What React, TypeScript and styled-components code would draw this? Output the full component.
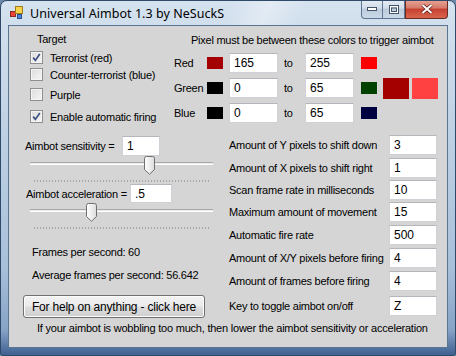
import React from 'react';
import styled, { createGlobalStyle } from 'styled-components';

const GlobalStyle = createGlobalStyle`
	html, body {
		margin: 0;
		padding: 0;
		background: #6d88a8;
		overflow: hidden;
	}
	body {
		font-family: "Liberation Sans", Arial, sans-serif;
	}
`;

const Window = styled.div`
	width: 456px;
	height: 356px;
	box-sizing: border-box;
	border: 1px solid #2f4a68;
	border-radius: 7px 7px 3px 3px;
	background: linear-gradient(180deg, #d5e2ef 0%, #c3d4e6 30%, #a9c0da 75%, #86a3c6 93%, #3f6090 100%);
	display: flex;
	flex-direction: column;
	overflow: hidden;
`;

const TitleBar = styled.div`
	height: 24px;
	display: flex;
	align-items: flex-start;
	padding: 0 7px 0 9px;
	background: linear-gradient(115deg, rgba(255, 255, 255, 0) 50%, rgba(255, 255, 255, 0.35) 58%, rgba(255, 255, 255, 0) 66%);
`;

const TitleIcon = styled.svg`
	margin-top: 5px;
	flex: none;
`;

const TitleText = styled.div`
	margin: 4px 0 0 6px;
	font-family: "Noto Sans", "Open Sans", sans-serif;
	font-size: 12.5px;
	line-height: 17px;
	letter-spacing: 0.05px;
	color: #000;
	flex: 1;
`;

const CaptionGroup = styled.div`
	display: flex;
	margin-top: -1px;
`;

const CaptionButton = styled.div<{ $close?: boolean; $first?: boolean }>`
	height: 19px;
	width: ${(p) => (p.$close ? '43px' : '22px')};
	box-sizing: border-box;
	border: 1px solid ${(p) => (p.$close ? '#6a2a24' : '#5d7594')};
	border-left-width: ${(p) => (p.$first || p.$close ? '1px' : '0')};
	border-top: none;
	border-radius: ${(p) => (p.$first ? '0 0 0 4px' : p.$close ? '0 0 4px 0' : '0')};
	background: ${(p) =>
		p.$close
			? 'linear-gradient(180deg, #e8a596 0%, #d67a6a 45%, #c7402f 50%, #d8664f 100%)'
			: 'linear-gradient(180deg, #e6edf5 0%, #d2dde9 45%, #bccbdc 50%, #cad8e6 100%)'};
	display: flex;
	align-items: center;
	justify-content: center;
`;

const Client = styled.div`
	flex: 1;
	margin: 0 7px 7px 7px;
	border: 1px solid #5a7494;
	background: #d5d5d5;
	display: flex;
	flex-direction: column;
	color: #000;
	font-size: 11px;
	letter-spacing: -0.25px;
	line-height: 14px;
`;

const TopSection = styled.div`
	display: flex;
`;

const TargetGroup = styled.div`
	width: 165px;
	box-sizing: border-box;
	padding-left: 21px;
	display: flex;
	flex-direction: column;
`;

const GroupTitle = styled.div`
	margin: 6px 0 0 7px;
`;

const CheckRow = styled.label<{ $mt: number }>`
	display: flex;
	align-items: center;
	height: 17px;
	margin-top: ${(p) => p.$mt}px;
	white-space: nowrap;
`;

const CheckBox = styled.span`
	width: 13px;
	height: 13px;
	box-sizing: border-box;
	border: 1px solid #8e8f8f;
	background: linear-gradient(135deg, #dcdcdc 0%, #f6f6f6 100%);
	box-shadow: inset 0 0 0 1px #f4f4f4;
	margin-right: 7px;
	display: flex;
	align-items: center;
	justify-content: center;
`;

const ColorPanel = styled.div`
	display: flex;
	flex-direction: column;
`;

const ColorHeader = styled.div`
	margin: 7px 0 0 17px;
	white-space: nowrap;
`;

const ColorBody = styled.div`
	display: flex;
	align-items: center;
	margin-top: 6px;
`;

const ColorGrid = styled.div`
	display: grid;
	grid-template-columns: 27px 16px 49px 15px 49px 16px;
	grid-auto-rows: 20px;
	column-gap: 6px;
	row-gap: 5px;
	align-items: center;
`;

const RowLabel = styled.span`
	white-space: nowrap;
`;

const Swatch = styled.span<{ $offset?: number }>`
	width: 16px;
	height: 12px;
	margin-left: ${(p) => p.$offset || 0}px;
`;

const BigSwatches = styled.div`
	display: flex;
	gap: 3px;
	margin-left: 7px;
`;

const BigSwatch = styled.span`
	width: 26px;
	height: 21px;
`;

const TextBox = styled.input<{ $w: number; $h?: number }>`
	width: ${(p) => p.$w}px;
	height: ${(p) => p.$h || 20}px;
	box-sizing: border-box;
	margin: 0;
	padding: 0 0 0 4px;
	border: 1px solid #cfd1d6;
	border-top-color: #b4b6bc;
	background: #fff;
	font: inherit;
	font-size: 12px;
	letter-spacing: 0;
	color: #000;
	outline: none;
`;

const MiddleSection = styled.div`
	display: flex;
	margin-top: 10px;
`;

const LeftColumn = styled.div`
	width: 220px;
	display: flex;
	flex-direction: column;
`;

const FieldRow = styled.div<{ $indent: number; $labelWidth: number; $mt?: number }>`
	display: flex;
	align-items: center;
	padding-left: ${(p) => p.$indent}px;
	margin-top: ${(p) => p.$mt || 0}px;
	& > span {
		width: ${(p) => p.$labelWidth}px;
		white-space: nowrap;
	}
`;

const SliderBox = styled.div`
	position: relative;
	margin-left: 21px;
	width: 183px;
	height: 28px;
`;

const Track = styled.div`
	position: absolute;
	left: 0;
	right: 0;
	top: 6px;
	height: 3px;
	box-sizing: border-box;
	border-top: 1px solid #a9a9a9;
	border-bottom: 1px solid #ffffff;
	background: #ececec;
`;

const Ticks = styled.div`
	position: absolute;
	left: 4px;
	width: 175px;
	top: 24px;
	height: 2px;
	background: repeating-linear-gradient(90deg, #a6a6a6 0 1px, transparent 1px 3px);
`;

const Thumb = styled.svg`
	position: absolute;
	top: 0;
`;

const InfoText = styled.div<{ $mt: number }>`
	margin: ${(p) => p.$mt}px 0 0 23px;
	white-space: nowrap;
`;

const HelpButton = styled.button`
	margin: 13px 0 0 14px;
	width: 182px;
	height: 23px;
	box-sizing: border-box;
	border: 1px solid #707070;
	border-radius: 3px;
	background: linear-gradient(180deg, #f2f2f2 0%, #ebebeb 48%, #dddddd 52%, #cfcfcf 100%);
	box-shadow: inset 0 0 0 1px #fcfcfc;
	font: inherit;
	font-size: 12px;
	letter-spacing: -0.2px;
	color: #000;
	padding: 0;
`;

const RightColumn = styled.div`
	display: flex;
	flex-direction: column;
`;

const SettingRow = styled.div<{ $mt: number }>`
	display: flex;
	align-items: center;
	margin-top: ${(p) => p.$mt}px;
	& > span {
		width: 160px;
		white-space: nowrap;
	}
`;

const Footer = styled.div`
	margin: 3px 0 0 28px;
	white-space: nowrap;
	letter-spacing: -0.22px;
`;

const colorRows = [
	{ label: 'Red', min: 165, max: 255, ch: 0 },
	{ label: 'Green', min: 0, max: 65, ch: 1 },
	{ label: 'Blue', min: 0, max: 65, ch: 2 },
];

const channelColor = (ch: number, v: number) => {
	const c = [0, 0, 0];
	c[ch] = v;
	return `rgb(${c[0]}, ${c[1]}, ${c[2]})`;
};

const settings = [
	{ label: 'Amount of Y pixels to shift down', value: '3', mt: 0 },
	{ label: 'Amount of X pixels to shift right', value: '1', mt: 3 },
	{ label: 'Scan frame rate in milliseconds', value: '10', mt: 2 },
	{ label: 'Maximum amount of movement', value: '15', mt: 2 },
	{ label: 'Automatic fire rate', value: '500', mt: 3 },
	{ label: 'Amount of X/Y pixels before firing', value: '4', mt: 3 },
	{ label: 'Amount of frames before firing', value: '4', mt: 3 },
	{ label: 'Key to toggle aimbot on/off', value: 'Z', mt: 5 },
];

const Check = ({ checked, label, mt }: { checked: boolean; label: string; mt: number }) => (
	<CheckRow $mt={mt}>
		<CheckBox>
			{checked && (
				<svg width="9" height="9" viewBox="0 0 9 9">
					<path d="M1.2 4.6 L3.4 7.4 L7.8 1" fill="none" stroke="#3d5184" strokeWidth="1.7" />
				</svg>
			)}
		</CheckBox>
		{label}
	</CheckRow>
);

const Slider = ({ fraction }: { fraction: number }) => {
	const center = 4 + 174 * fraction;
	return (
		<SliderBox>
			<Track />
			<Ticks />
			<Thumb width="11" height="19" viewBox="0 0 11 19" style={{ left: center - 6 }}>
				<defs>
					<linearGradient id="thumbFill" x1="0" y1="0" x2="1" y2="0">
						<stop offset="0" stopColor="#ffffff" />
						<stop offset="1" stopColor="#dcdcdc" />
					</linearGradient>
				</defs>
				<path
					d="M0.5 2.5 Q0.5 0.5 2.5 0.5 H8.5 Q10.5 0.5 10.5 2.5 V13.5 L5.5 18.3 L0.5 13.5 Z"
					fill="url(#thumbFill)"
					stroke="#6f6f6f"
				/>
			</Thumb>
		</SliderBox>
	);
};

const App = () => {
	const minColor = `rgb(${colorRows[0].min}, ${colorRows[1].min}, ${colorRows[2].min})`;
	const maxColor = `rgb(${colorRows[0].max}, ${colorRows[1].max}, ${colorRows[2].max})`;
	return (
		<>
			<GlobalStyle />
			<Window>
				<TitleBar>
					<TitleIcon width="14" height="14" viewBox="0 0 14 14">
						<rect x="0.5" y="5.5" width="5" height="5" fill="#e8443a" stroke="#8a2a22" />
						<rect x="5.5" y="0.5" width="7" height="7" fill="#f7d14a" stroke="#a07c18" />
						<rect x="7.5" y="8.5" width="4" height="4" fill="#4f86d8" stroke="#2a4f8a" />
					</TitleIcon>
					<TitleText>Universal Aimbot 1.3 by NeSuckS</TitleText>
					<CaptionGroup>
						<CaptionButton $first>
							<svg width="10" height="4" viewBox="0 0 10 4">
								<rect x="0.5" y="0.5" width="9" height="3" fill="#fff" stroke="#44546a" />
							</svg>
						</CaptionButton>
						<CaptionButton>
							<svg width="10" height="9" viewBox="0 0 10 9">
								<rect x="0.5" y="0.5" width="9" height="8" fill="none" stroke="#44546a" />
								<rect x="1.5" y="1.5" width="7" height="6" fill="none" stroke="#fff" />
								<rect x="2.5" y="3" width="5" height="3.5" fill="none" stroke="#44546a" />
							</svg>
						</CaptionButton>
						<CaptionButton $close>
							<svg width="12" height="10" viewBox="0 0 12 10">
								<path d="M1.5 1 L10.5 9 M10.5 1 L1.5 9" stroke="#5a1c16" strokeWidth="3.4" />
								<path d="M1.5 1 L10.5 9 M10.5 1 L1.5 9" stroke="#fff" strokeWidth="2" />
							</svg>
						</CaptionButton>
					</CaptionGroup>
				</TitleBar>
				<Client>
					<TopSection>
						<TargetGroup>
							<GroupTitle>Target</GroupTitle>
							<Check checked label="Terrorist (red)" mt={3} />
							<Check checked={false} label="Counter-terrorist (blue)" mt={0} />
							<Check checked={false} label="Purple" mt={3} />
							<Check checked label="Enable automatic firing" mt={5} />
						</TargetGroup>
						<ColorPanel>
							<ColorHeader>Pixel must be between these colors to trigger aimbot</ColorHeader>
							<ColorBody>
								<ColorGrid>
									{colorRows.map((row) => (
										<React.Fragment key={row.label}>
											<RowLabel>{row.label}</RowLabel>
											<Swatch style={{ background: channelColor(row.ch, row.min) }} />
											<TextBox $w={49} defaultValue={String(row.min)} />
											<RowLabel>to</RowLabel>
											<TextBox $w={49} defaultValue={String(row.max)} />
											<Swatch $offset={1} style={{ background: channelColor(row.ch, row.max) }} />
										</React.Fragment>
									))}
								</ColorGrid>
								<BigSwatches>
									<BigSwatch style={{ background: minColor }} />
									<BigSwatch style={{ background: maxColor }} />
								</BigSwatches>
							</ColorBody>
						</ColorPanel>
					</TopSection>
					<MiddleSection>
						<LeftColumn>
							<FieldRow $indent={16} $labelWidth={97} $mt={1}>
								<span>Aimbot sensitivity =</span>
								<TextBox $w={38} defaultValue="1" />
							</FieldRow>
							<Slider fraction={0.667} />
							<FieldRow $indent={17} $labelWidth={104}>
								<span>Aimbot acceleration =</span>
								<TextBox $w={42} $h={19} defaultValue=".5" />
							</FieldRow>
							<Slider fraction={0.333} />
							<InfoText $mt={14}>Frames per second: 60</InfoText>
							<InfoText $mt={9}>Average frames per second: 56.642</InfoText>
							<HelpButton>For help on anything - click here</HelpButton>
						</LeftColumn>
						<RightColumn>
							{settings.map((s) => (
								<SettingRow key={s.label} $mt={s.mt}>
									<span>{s.label}</span>
									<TextBox $w={48} defaultValue={s.value} />
								</SettingRow>
							))}
						</RightColumn>
					</MiddleSection>
					<Footer>If your aimbot is wobbling too much, then lower the aimbot sensitivity or acceleration</Footer>
				</Client>
			</Window>
		</>
	);
};

export default App;
